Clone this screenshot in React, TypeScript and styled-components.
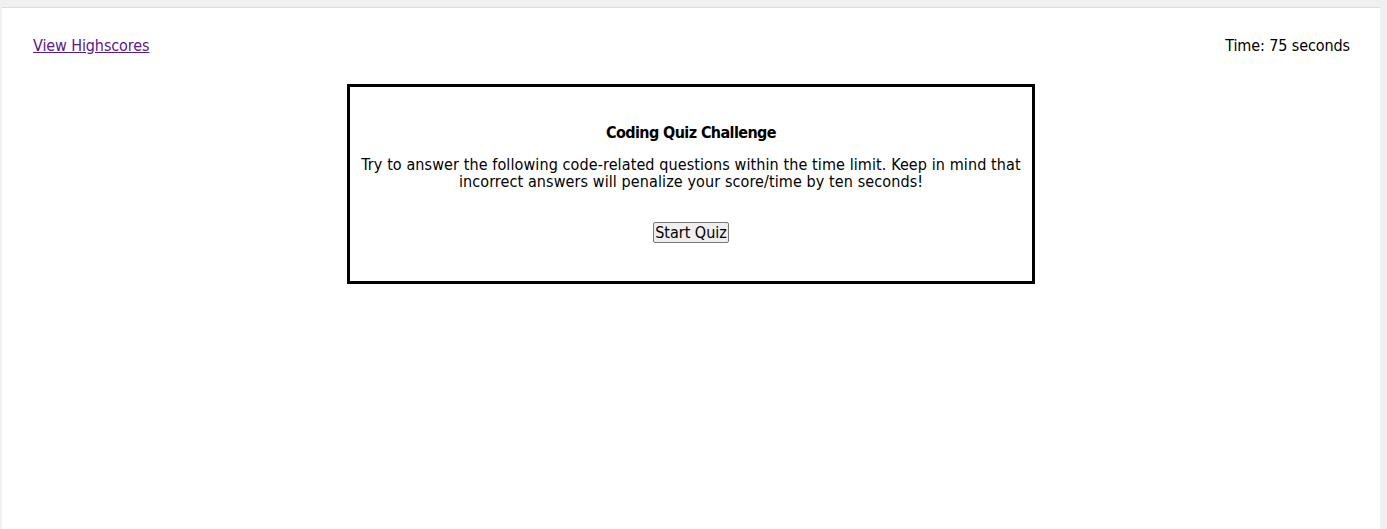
import React from "react";
import styled, { createGlobalStyle } from "styled-components";

const Global = createGlobalStyle`
  html, body { margin: 0; padding: 0; background: #f0f0f0; }
  body { font-family: "DejaVu Sans Condensed", "DejaVu Sans", sans-serif; font-size: 16px; color: #000; }
`;

const Frame = styled.div`
  margin: 7px 0 0 2px;
  width: 1378px;
  height: 522px;
  background: #fff;
  border-top: 1px solid #dcdcdc;
  box-sizing: border-box;
`;

const Header = styled.header`
  display: flex;
  justify-content: space-between;
  align-items: center;
  padding: 28px 30px 0 31px;
  line-height: 19px;
`;

const HighscoreLink = styled.a`
  color: #551a8b;
  text-decoration: underline;
  letter-spacing: -0.1px;
`;

const Timer = styled.div`
  letter-spacing: -0.1px;
`;

const Card = styled.section`
  width: 688px;
  box-sizing: border-box;
  margin: 29px auto 0;
  border: 3px solid #000;
  padding: 36px 10px 38px;
  text-align: center;
`;

const Title = styled.h1`
  margin: 0;
  font-size: 16px;
  font-weight: bold;
  line-height: 19px;
  letter-spacing: -0.6px;
`;

const Text = styled.p`
  margin: 14px 0 32px;
  line-height: 17px;
  letter-spacing: 0.1px;
`;

const StartButton = styled.button`
  font-family: inherit;
  font-size: 16px;
  line-height: 18px;
  padding: 0 1px;
  height: 21px;
  background: #efefef;
  border: 1px solid #767676;
  border-radius: 2px;
  color: #000;
`;

export default function App() {
  return (
    <>
      <Global />
      <Frame>
        <Header>
          <HighscoreLink href="#">View Highscores</HighscoreLink>
          <Timer>Time: 75 seconds</Timer>
        </Header>
        <Card>
          <Title>Coding Quiz Challenge</Title>
          <Text>
            Try to answer the following code-related questions within the time limit. Keep in mind that incorrect answers will penalize your score/time by ten seconds!
          </Text>
          <StartButton>Start Quiz</StartButton>
        </Card>
      </Frame>
    </>
  );
}
